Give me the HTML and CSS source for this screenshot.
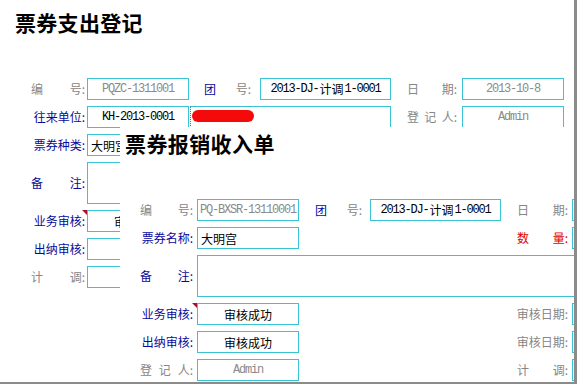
FILE: index.html
```html
<!DOCTYPE html>
<html lang="zh">
<head>
<meta charset="utf-8">
<title>票券报销收入单</title>
<link rel="stylesheet" href="styles.css">
</head>
<body>
<div class="screen">
  <section class="win w1">
    <h1 class="title">票券支出登记</h1>
    <div class="form">
      <div class="row">
        <span class="lab la grey"><span>编</span><span>号:</span></span>
        <span class="inp ia gt">PQZC-1311001</span>
        <span class="lab lb"><span class="blue">团</span><span class="grey">号:</span></span>
        <span class="inp ib">2013-DJ-<span class="cj up">计调</span>1-0001</span>
        <span class="lab lc grey"><span>日</span><span>期:</span></span>
        <span class="inp ic gt">2013-10-8</span>
      </div>
      <div class="row">
        <span class="lab la end blue">往来单位:</span>
        <span class="inp ia">KH-2013-0001</span>
        <span class="inp iwide"><span class="redact"></span></span>
        <span class="lab lc grey"><span>登</span><span>记</span><span>人:</span></span>
        <span class="inp ic gt">Admin</span>
      </div>
      <div class="row">
        <span class="lab la end blue">票券种类:</span>
        <span class="inp ia left cj">大明宫</span>
      </div>
      <div class="row tall">
        <span class="lab la blue"><span>备</span><span>注:</span></span>
        <span class="inp area"></span>
      </div>
      <div class="row">
        <span class="lab la end blue flag">业务审核:</span>
        <span class="inp ia cj">审核成功</span>
      </div>
      <div class="row">
        <span class="lab la end blue">出纳审核:</span>
        <span class="inp ia"></span>
      </div>
      <div class="row">
        <span class="lab la grey"><span>计</span><span>调:</span></span>
        <span class="inp ia"></span>
      </div>
    </div>
  </section>

  <section class="win w2">
    <h1 class="title">票券报销收入单</h1>
    <div class="form">
      <div class="row">
        <span class="lab la grey"><span>编</span><span>号:</span></span>
        <span class="inp ia gt">PQ-BXSR-13110001</span>
        <span class="lab lb"><span class="blue">团</span><span class="grey">号:</span></span>
        <span class="inp ib">2013-DJ-<span class="cj up">计调</span>1-0001</span>
        <span class="lab lc grey"><span>日</span><span>期:</span></span>
        <span class="inp ic"></span>
      </div>
      <div class="row">
        <span class="lab la end blue">票券名称:</span>
        <span class="inp ia left cj">大明宫</span>
        <span class="skip"></span>
        <span class="lab lc red"><span>数</span><span>量:</span></span>
        <span class="inp ic"></span>
      </div>
      <div class="row tall">
        <span class="lab la blue"><span>备</span><span>注:</span></span>
        <span class="inp area"></span>
      </div>
      <div class="row">
        <span class="lab la end blue flag">业务审核:</span>
        <span class="inp ia cj">审核成功</span>
        <span class="skip"></span>
        <span class="lab lc end grey">审核日期:</span>
        <span class="inp ic"></span>
      </div>
      <div class="row">
        <span class="lab la end blue">出纳审核:</span>
        <span class="inp ia cj">审核成功</span>
        <span class="skip"></span>
        <span class="lab lc end grey">审核日期:</span>
        <span class="inp ic"></span>
      </div>
      <div class="row">
        <span class="lab la grey"><span>登</span><span>记</span><span>人:</span></span>
        <span class="inp ia gt">Admin</span>
        <span class="skip"></span>
        <span class="lab lc grey"><span>计</span><span>调:</span></span>
        <span class="inp ic"></span>
      </div>
    </div>
  </section>
</div>
</body>
</html>
```

FILE: styles.css
```css
html, body {
  margin: 0;
  padding: 0;
  background: #fff;
}

body {
  font-family: "Noto Sans CJK SC", sans-serif;
  font-size: 12px;
  color: #000;
}

.screen {
  position: relative;
  width: 574px;
  height: 382px;
  border-right: 3px solid #8b8b8b;
  border-bottom: 2px solid #8b8b8b;
  overflow: hidden;
  background: #fff;
}

.title {
  margin: 0;
  font-size: 21px;
  font-weight: 700;
  line-height: 24px;
  letter-spacing: 0.3px;
  color: #000;
}

.w1 .title {
  padding: 10px 0 0 15px;
}

.form {
  margin-top: 44px;
}

.row {
  display: flex;
  align-items: center;
  height: 22px;
  margin-bottom: 6px;
}

.row.tall {
  height: 42px;
}

.lab {
  position: relative;
  display: flex;
  justify-content: space-between;
  align-items: center;
  flex: none;
  line-height: 14px;
  white-space: nowrap;
}

.lab.end {
  justify-content: flex-end;
}

.blue { color: #0a0a9a; }
.grey { color: #868686; }
.red { color: #e00000; }

.flag::after {
  content: "";
  position: absolute;
  top: -4px;
  right: -2px;
  border-top: 5px solid #a8102c;
  border-left: 5px solid transparent;
}

.inp {
  box-sizing: border-box;
  position: relative;
  flex: none;
  height: 22px;
  border: 1px solid #3ac3d4;
  display: flex;
  align-items: center;
  justify-content: center;
  font-family: "Liberation Mono", "Noto Sans CJK SC", monospace;
  font-size: 12px;
  letter-spacing: -1.2px;
  color: #000;
  white-space: nowrap;
  overflow: hidden;
}

.inp.gt {
  color: #8a8a8a;
}

.inp.left {
  justify-content: flex-start;
  padding-left: 3px;
}

.cj {
  font-family: "Noto Sans CJK SC", sans-serif;
  letter-spacing: 0;
}

.cj.up {
  position: relative;
  top: -1px;
  margin: 0 1px;
}

.inp.area {
  height: 42px;
  width: 420px;
}

.skip {
  flex: none;
  width: 202px;
}

/* window 1 columns */
.w1 .form { padding-left: 31px; }
.w1 .la { width: 54px; margin-right: 2px; }
.w1 .ia { width: 102px; }
.w1 .lb { width: 47px; margin-left: 15px; margin-right: 9px; }
.w1 .ib { width: 131px; }
.w1 .lc { width: 50px; margin-left: 16px; margin-right: 5px; }
.w1 .ic { width: 102px; }

.w1 .iwide {
  width: 201px;
  margin-left: 1px;
  border-left: 1px dotted #3d8080;
  overflow: visible;
}

.redact {
  position: absolute;
  left: 1px;
  top: 3px;
  width: 62px;
  height: 12px;
  border-radius: 6px;
  background: #f40a0a;
}

/* window 2 overlay */
.w2 {
  position: absolute;
  left: 120px;
  top: 127px;
  right: 0;
  bottom: 0;
  background: #fff;
  overflow: hidden;
}

.w2 .title {
  padding: 4px 0 0 5px;
  letter-spacing: 0.4px;
}

.w2 .form { padding-left: 20px; }
.w2 .la { width: 53px; margin-right: 4px; }
.w2 .ia { width: 102px; }
.w2 .lb { width: 47px; margin-left: 16px; margin-right: 8px; }
.w2 .ib { width: 131px; }
.w2 .lc { width: 51px; margin-left: 16px; margin-right: 4px; }
.w2 .ic { width: 102px; }
.w2 .flag::after { right: -4px; }
```
